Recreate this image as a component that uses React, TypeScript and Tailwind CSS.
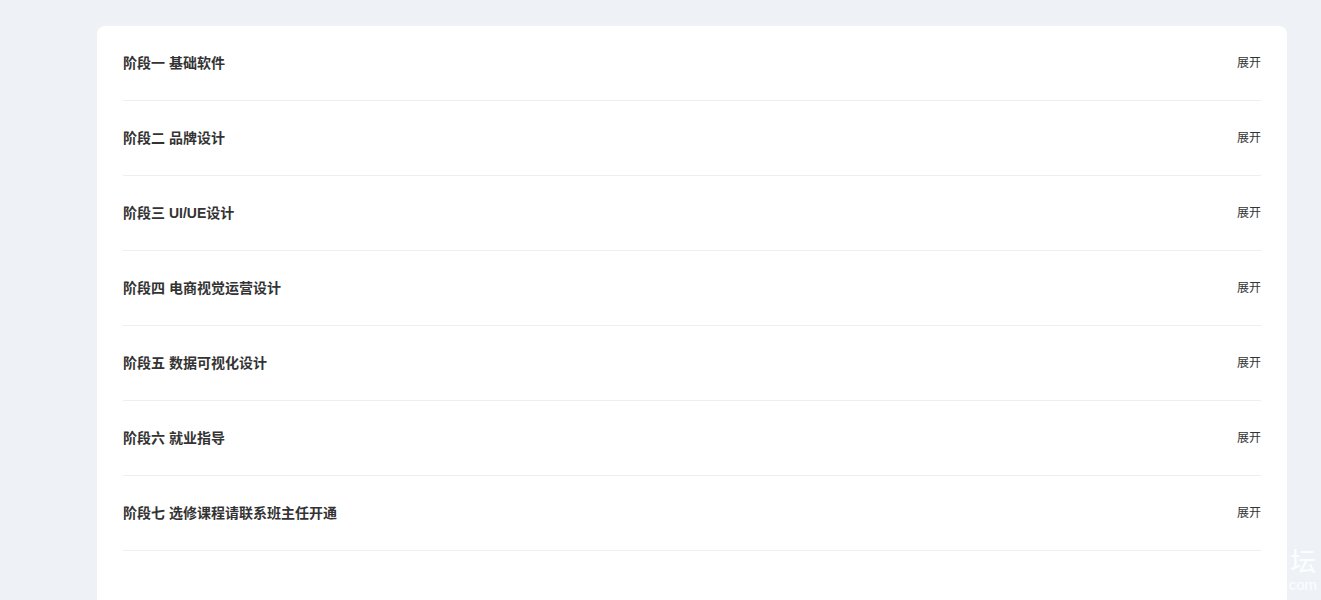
import React from 'react';

const stages = [
  '阶段一 基础软件',
  '阶段二 品牌设计',
  '阶段三 UI/UE设计',
  '阶段四 电商视觉运营设计',
  '阶段五 数据可视化设计',
  '阶段六 就业指导',
  '阶段七 选修课程请联系班主任开通',
];

function App() {
  return (
    <div
      className="relative min-h-[600px] bg-[#eef2f6] pt-[26px] pl-[97px] pr-[34px] overflow-hidden"
      style={{ fontFamily: '"Liberation Sans", "Noto Sans CJK SC", sans-serif' }}
    >
      <div className="bg-white rounded-t-lg px-[26px] pb-[60px] min-h-[574px]">
        {stages.map((title) => (
          <div
            key={title}
            className="flex items-center justify-between h-[75px] border-b border-[#eeeeee]"
          >
            <span className="text-sm font-bold text-[#333333]">{title}</span>
            <button className="text-xs text-[#333333] cursor-pointer">展开</button>
          </div>
        ))}
      </div>
      {/* watermark */}
      <span className="absolute right-[5px] top-[546px] text-[26px] leading-[32px] text-white/85 pointer-events-none select-none">
        坛
      </span>
      <span className="absolute right-[4px] top-[576px] text-[15px] leading-[18px] text-white/85 pointer-events-none select-none">
        .com
      </span>
    </div>
  );
}

export default App;
